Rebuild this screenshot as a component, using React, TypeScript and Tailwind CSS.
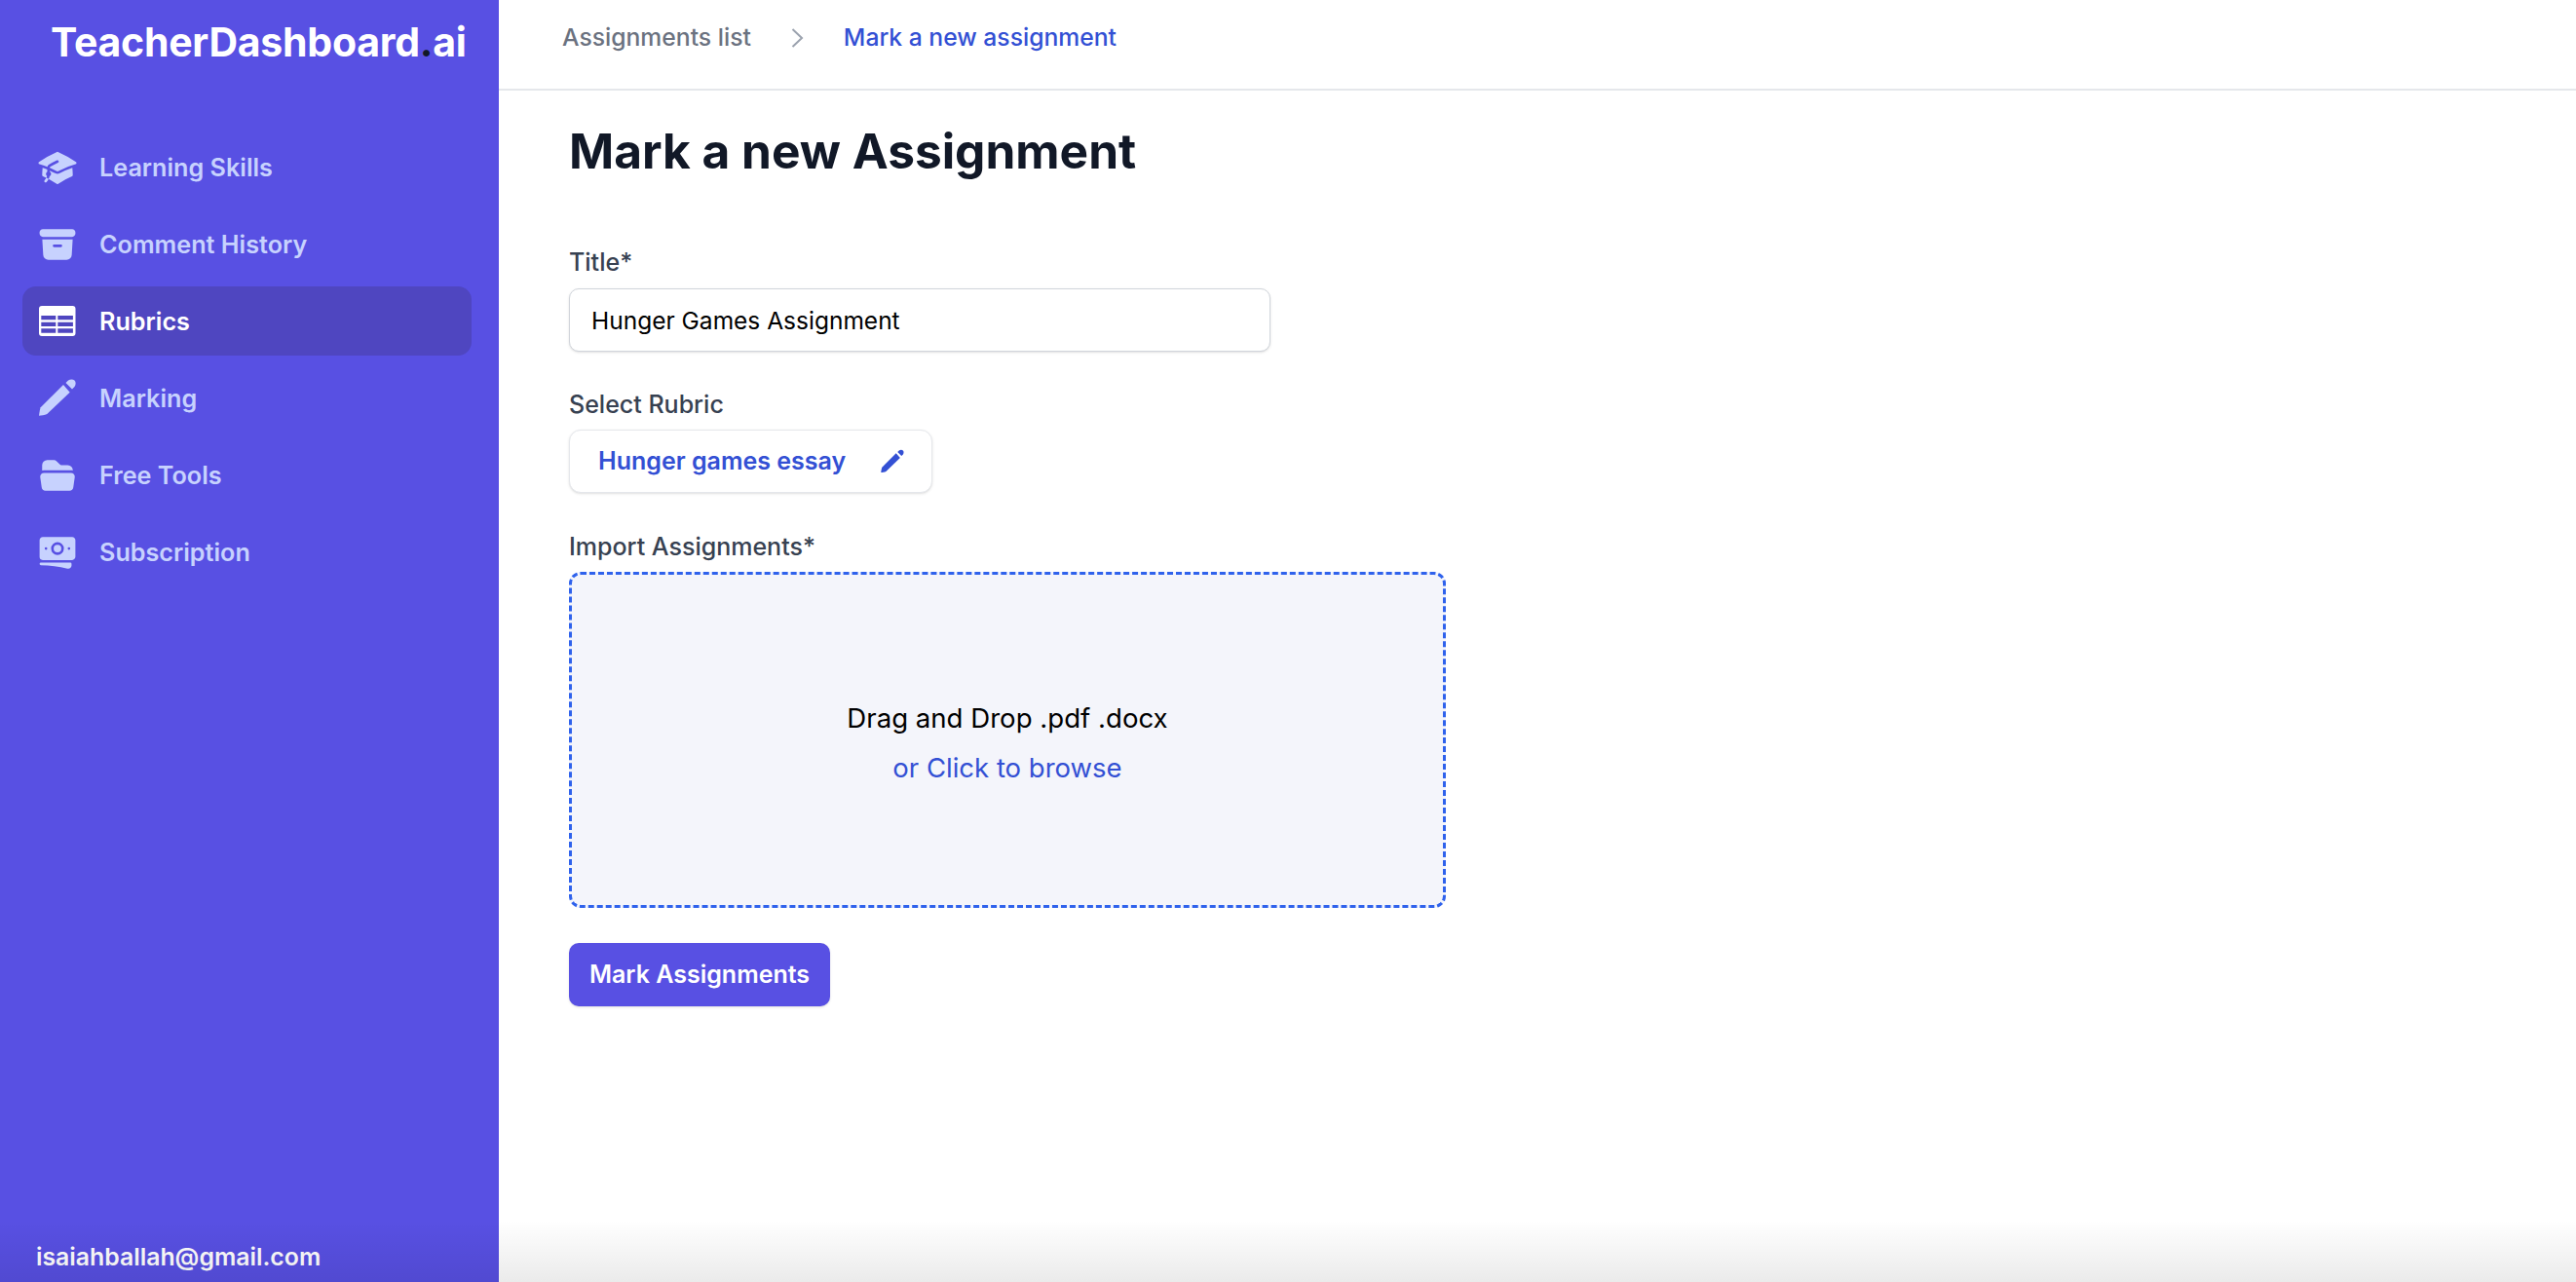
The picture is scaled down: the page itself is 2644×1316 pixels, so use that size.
import React from "react";
import { HiAcademicCap, HiArchiveBox, HiFolderOpen, HiBanknotes } from "react-icons/hi2";

function Pencil({ className }: { className?: string }) {
  return (
    <svg viewBox="-1 0 42 42" fill="currentColor" className={className}>
      <path d="M1 38.7C1.5 35 2 32 2.7 30.3L26 7L32.7 14.7L9.3 37C7 38 3 38.7 1 38.7Z" />
      <path d="M28.5 5L31 2.5C33 1 36 1 37.5 2.5C39 4 39 7 37.5 9L35 11.5Z" />
    </svg>
  );
}

function TableIcon({ className }: { className?: string }) {
  return (
    <svg viewBox="0 0 42 42" fill="currentColor" className={className}>
      <path
        fillRule="evenodd"
        d="M5 5H36.5A3 3 0 0 1 39.5 8V33A3 3 0 0 1 36.5 36H5A3 3 0 0 1 2 33V8A3 3 0 0 1 5 5ZM4.3 15V19.3H19.3V15ZM21.3 15V19.3H36.9V15ZM4.3 21.7V26H19.3V21.7ZM21.3 21.7V26H36.9V21.7ZM4.3 28.3V32.7H19.3V28.3ZM21.3 28.3V32.7H36.9V28.3Z"
      />
    </svg>
  );
}

const nav = [
  { label: "Learning Skills", Icon: HiAcademicCap },
  { label: "Comment History", Icon: HiArchiveBox },
  { label: "Rubrics", Icon: TableIcon, active: true },
  { label: "Marking", Icon: Pencil },
  { label: "Free Tools", Icon: HiFolderOpen },
  { label: "Subscription", Icon: HiBanknotes },
];

export default function App() {
  return (
    <div className="relative flex h-screen w-full overflow-hidden bg-white font-['Inter',sans-serif]">
      <aside className="flex w-[512px] shrink-0 flex-col bg-[#5850e3]">
        <div className="pl-[52px] pt-[16px] text-[41px] leading-[54px] font-bold tracking-[-0.25px] text-white">
          TeacherDashboard<span className="text-[#111827]">.</span>ai
        </div>
        <nav className="mt-[66px] flex w-[484px] flex-col gap-[8px] px-[23px]">
          {nav.map(({ label, Icon, active }) => (
            <div
              key={label}
              className={`flex h-[71px] w-[461px] items-center gap-[22px] rounded-[14px] pl-[15px] text-[25.2px] font-semibold ${
                active ? "bg-[#4f46c0] text-white" : "text-[#c7d2fe]"
              }`}
            >
              <Icon className="h-[42px] w-[42px] shrink-0" />
              <span className="pt-[2px]">{label}</span>
            </div>
          ))}
        </nav>
        <div className="mt-auto pb-[10px] pl-[37px] text-[24.8px] leading-[32px] font-semibold text-white">
          isaiahballah@gmail.com
        </div>
      </aside>
      <main className="flex min-w-0 flex-1 flex-col">
        <header className="flex h-[93px] items-center gap-[41px] border-b-2 border-[#e5e7eb] pb-[14px] pl-[65px] text-[24.7px] font-medium">
          <span className="text-[#6b7280]">Assignments list</span>
          <svg viewBox="0 0 13 20" fill="none" stroke="#9ca3af" strokeWidth="2" className="h-[20px] w-[13px] shrink-0">
            <path d="M1.5 1L11 10L1.5 19" />
          </svg>
          <span className="text-[#3350d4]">Mark a new assignment</span>
        </header>
        <div className="flex flex-col pl-[72px]">
          <h1 className="mt-[30px] text-[49.6px] leading-[64px] font-bold text-[#111827]">Mark a new Assignment</h1>
          <label className="mt-[65px] text-[25px] leading-[34px] font-medium text-[#374151]">Title*</label>
          <input
            readOnly
            value="Hunger Games Assignment"
            className="mt-[10px] h-[65px] w-[720px] rounded-[10px] border-[1.5px] border-[#d1d5db] bg-white px-[22px] text-[24.5px] text-black shadow-sm outline-none"
          />
          <label className="mt-[37px] text-[25px] leading-[34px] font-medium text-[#374151]">Select Rubric</label>
          <div className="mt-[9px] flex h-[65px] w-[373px] items-center justify-between rounded-[12px] border-[1.5px] border-[#e5e7eb] bg-white pl-[29px] pr-[27px] shadow-sm">
            <span className="pt-[1px] text-[25px] font-semibold text-[#3350d4]">Hunger games essay</span>
            <Pencil className="h-[26px] w-[26px] text-[#3350d4]" />
          </div>
          <label className="mt-[38px] text-[25px] leading-[34px] font-medium text-[#374151]">Import Assignments*</label>
          <div className="mt-[9px] flex h-[345px] w-[900px] flex-col items-center justify-center rounded-[12px] border-[3px] border-dashed border-[#2f62ec] bg-[#f4f5fb] pt-[5px]">
            <span className="text-[27.6px] leading-[40px] text-black">Drag and Drop .pdf .docx</span>
            <span className="mt-[11px] text-[27.5px] leading-[40px] text-[#3350d4]">or Click to browse</span>
          </div>
          <button className="mt-[36px] flex h-[65px] w-[268px] items-center justify-center rounded-[10px] bg-[#5850e3] text-[25px] font-semibold text-white shadow-sm">
            Mark Assignments
          </button>
        </div>
      </main>
      <div className="pointer-events-none absolute inset-x-0 bottom-0 h-[64px] bg-gradient-to-b from-transparent to-black/[0.08]" />
    </div>
  );
}
